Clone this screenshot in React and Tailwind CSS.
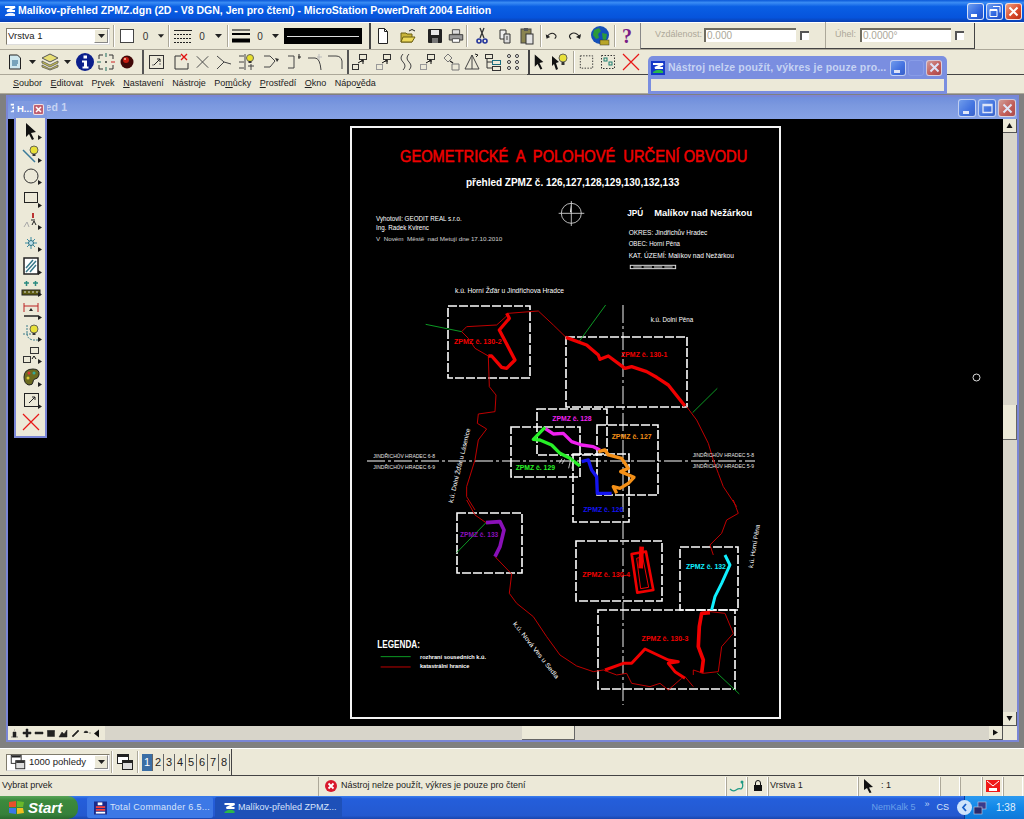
import React from "react";

const Ic = ({ w = 20, h = 20, children }) => (
  <svg width={w} height={h} viewBox={`0 0 ${w} ${h}`} className="block" fill="none">
    {children}
  </svg>
);

// --- toolbar icons ---
const Drop = () => (
  <svg width="9" height="5" viewBox="0 0 9 5" className="block"><path d="M1 0h7L4.500 4z" fill="#222" /></svg>
);
const NewDoc = () => <Ic><path d="M5.500 2.500h6l3 3v12h-9z" fill="#fff" stroke="#222" /><path d="M11.500 2.500v3h3" stroke="#222" /></Ic>;
const OpenDoc = () => <Ic><path d="M3 7h5l1 1h5v8H3z" fill="#c8b43a" stroke="#6b5f10" /><path d="M5 11h12l-3 5H3z" fill="#ecd85a" stroke="#6b5f10" /><path d="M11 5q3-3 6 0" stroke="#222" /></Ic>;
const Save = () => <Ic><rect x="3" y="3" width="14" height="14" rx="1" fill="#222" /><rect x="6" y="4" width="8" height="5" fill="#e8e8e8" /><rect x="7" y="12" width="6" height="5" fill="#777" /></Ic>;
const Print = () => <Ic><path d="M6 3h8v5H6z" fill="#ddd" stroke="#444" /><path d="M2.500 8.500h15v6h-15z" fill="#999" stroke="#333" /><path d="M6 13h8v4H6z" fill="#fff" stroke="#444" /></Ic>;
const Cut = () => <Ic><path d="M8 2l4 10M12 2L8 12" stroke="#333" strokeWidth="1.300" /><circle cx="7" cy="15" r="2" stroke="#23359c" strokeWidth="1.600" /><circle cx="13" cy="15" r="2" stroke="#23359c" strokeWidth="1.600" /></Ic>;
const Copy = () => <Ic><path d="M5 4h6v9H5z" fill="#eee" stroke="#333" /><path d="M9 8h6v9H9z" fill="#dcdcdc" stroke="#333" /><path d="M11 11h2M11 13h2" stroke="#444" /></Ic>;
const Paste = () => <Ic><rect x="4" y="3" width="10" height="14" fill="#8a8450" stroke="#444" /><rect x="7" y="2" width="4" height="3" fill="#555" /><rect x="9" y="8" width="7" height="10" fill="#e4e4e4" stroke="#333" /></Ic>;
const Undo = () => <Ic><path d="M4 11q5-6 9-3 3 2 0 5" stroke="#222" strokeWidth="1.200" /><path d="M3 8l1 5 4-2z" fill="#222" /></Ic>;
const Redo = () => <Ic><path d="M16 11q-5-6-9-3-3 2 0 5" stroke="#222" strokeWidth="1.200" /><path d="M17 8l-1 5-4-2z" fill="#222" /></Ic>;
const Globe = () => <svg width="20" height="22" viewBox="0 0 20 22" className="block"><circle cx="10" cy="10" r="9" fill="#1550b8" /><path d="M4 5l5-2 2 3-3 3 1 4-3 1-3-4zM12 8l5 1-1 6-3 1z" fill="#2d9a3a" /><rect x="10" y="15" width="9" height="5" fill="#b8a528" stroke="#333" strokeWidth=".5" /></svg>;
const Help = () => <div className="text-[20px] leading-none font-bold text-[#7a1d86] font-['Liberation_Serif',serif]">?</div>;

const Doc2 = () => <Ic><path d="M4.500 3h8l3 3v11h-11z" fill="#cfe8ee" stroke="#222" /><path d="M7 9h6M7 11h6M7 13h5" stroke="#1f5f88" /></Ic>;
const Layers = () => <Ic><path d="M2 6l8-4 8 4-8 4z" fill="#e8df74" stroke="#555" /><path d="M2 9l8 4 8-4v2l-8 4-8-4zM2 13l8 4 8-4v2l-8 3-8-3z" fill="#cfc64e" stroke="#555" strokeWidth=".8" /></Ic>;
const Info = () => <svg width="20" height="20" viewBox="0 0 20 20" className="block"><circle cx="10" cy="10" r="9" fill="#0b1f8c" /><rect x="8.500" y="3.500" width="3.500" height="3" fill="#fff" /><path d="M7 8.500h5v6h1.500v2h-6v-2H9v-4H7z" fill="#fff" /></svg>;
const Fence = () => <Ic><path d="M3 7V3h4M13 3h4v4M17 13v4h-4M7 17H3v-4" stroke="#333" /><path d="M10 1v4M10 15v4M1 10h4" stroke="#1c6d5e" /><path d="M15 10h4" stroke="#c22" /><circle cx="10" cy="10" r="1" fill="#333" /></Ic>;
const Ball = () => <svg width="16" height="16" viewBox="0 0 16 16" className="block"><circle cx="8" cy="8" r="6.500" fill="#400808" /><circle cx="7" cy="6" r="3" fill="#c41b10" /><circle cx="6" cy="5" r="1" fill="#f6c8a8" /></svg>;
const BoxArrow = () => <Ic><rect x="2.500" y="3.500" width="14" height="13" stroke="#333" /><path d="M7 13l6-6M10 7h3v3" stroke="#222" /><path d="M5 13h2M13 11v2" stroke="#777" /></Ic>;
const CornerX = () => <Ic><path d="M10 4H4v13h13v-6" stroke="#333" /><path d="M10 2l6 6M16 2l-6 6" stroke="#e01010" strokeWidth="1.400" /></Ic>;
const XThin = () => <Ic><path d="M4 4l12 12M16 4L4 16" stroke="#444" /></Ic>;
const Branch = () => <Ic><path d="M3 4l7 6 7 2M10 10l-7 7" stroke="#444" /></Ic>;
const BulbLine = () => <Ic><path d="M2 4h5M2 10h5M2 16h5M8 2v16M14 12v6M11 14h6" stroke="#444" /><circle cx="13" cy="6" r="3.500" fill="#e8df2c" stroke="#665" /><rect x="11.500" y="9" width="3" height="2" fill="#333" /></Ic>;
const Chev = () => <Ic><path d="M3 4h6l5 5-5 6H3" stroke="#444" /><path d="M14 6l4 1-2 3z" fill="#333" /></Ic>;
const BracketUp = () => <Ic><path d="M4 4h6v12H4" stroke="#444" /><path d="M14 5l3 0M15 2v5" stroke="#222" /></Ic>;
const CurveA = () => <Ic><path d="M3 6h7q5 0 6 12" stroke="#444" /><path d="M14 2v6M12 5h5" stroke="#bbb" /></Ic>;
const CurveB = () => <Ic><path d="M3 4h8q5 0 6 5v8" stroke="#444" /></Ic>;
const TwoBox = ({ light }) => <Ic><rect x="2.500" y="12.500" width="6" height="5" stroke={light ? "#999" : "#333"} /><rect x="9.500" y="2.500" width="7" height="5" stroke="#333" /><path d="M8 11l5-3v4M11 9h3" stroke="#111" /></Ic>;
const Wavy = () => <Ic><path d="M7 2q-4 4 0 8t0 8M13 2q-4 4 0 8t0 8" stroke="#444" /></Ic>;
const Diamond = () => <Ic><path d="M7 2l4 4-4 4-4-4zM11 12h7v6h-7z" stroke="#777" /><path d="M9 9l3 2" stroke="#222" strokeWidth="1.400" /></Ic>;
const Tri = () => <Ic><path d="M10 3L3 17h14z" stroke="#444" /><path d="M10 3v14" stroke="#444" /><path d="M13 2l3 1-2 2" stroke="#222" /></Ic>;
const Tree = () => <Ic><rect x="2.500" y="2.500" width="7" height="4" stroke="#333" /><rect x="9.500" y="8.500" width="8" height="4" stroke="#1c6d7e" /><rect x="9.500" y="14.500" width="8" height="4" stroke="#333" /><path d="M4 7v9h5M4 10h5" stroke="#333" /></Ic>;
const Dots = () => <Ic><g stroke="#333" fill="#fff">{[4, 10, 16].flatMap((y) => [5, 13].map((x) => <circle key={x + "-" + y} cx={x} cy={y} r="1.500" />))}</g></Ic>;
const Pointer = () => <Ic><path d="M5 2l9 8-4 1 3 6-2 1-3-6-3 3z" fill="#111" /></Ic>;
const PointBulb = () => <Ic><path d="M2 4l7 6-3 1 2 6-2 1-2-6-2 2z" fill="#111" /><circle cx="13" cy="6" r="4" fill="#e8e038" stroke="#665" /><rect x="11.500" y="10" width="3" height="3" fill="#333" /></Ic>;
const DotSel = () => <Ic><rect x="3.500" y="3.500" width="13" height="13" stroke="#333" strokeDasharray="1.500 1.500" /></Ic>;
const DotSel2 = () => <Ic><rect x="3.500" y="3.500" width="13" height="13" stroke="#333" strokeDasharray="1.500 1.500" /><rect x="6" y="6" width="3" height="3" stroke="#1c7d6e" /><rect x="11" y="10" width="3" height="3" stroke="#1c7d6e" /></Ic>;
const RedX = ({ s = 20 }) => <svg width={s} height={s} viewBox="0 0 20 20" className="block"><path d="M2 2l16 16M18 2L2 18" stroke="#e81818" strokeWidth="1.200" /></svg>;
const Views = () => <Ic><rect x="2.500" y="2.500" width="11" height="9" fill="#fff" stroke="#222" /><path d="M3 3h10v2H3z" fill="#222" /><rect x="7.500" y="8.500" width="10" height="9" fill="#ddd" stroke="#222" /><path d="M8 9h9v2H8z" fill="#222" /></Ic>;
const LineStyle = () => <svg width="18" height="15" viewBox="0 0 18 15" className="block"><path d="M0 1.500h18" stroke="#222" /><path d="M0 5.500h18M0 9.500h18M0 13.500h18" stroke="#222" strokeDasharray="2 1" /></svg>;
const Weight = () => <svg width="18" height="15" viewBox="0 0 18 15" className="block"><path d="M0 1h18" stroke="#000" /><path d="M0 5h18" stroke="#000" strokeWidth="2" /><path d="M0 11.500h18" stroke="#000" strokeWidth="4" /></svg>;

// --- toolbox icons ---
const BoxIcons = [
  <Ic key="a"><path d="M5 2l10 9-5 1 3 6-2 1-3-6-3 3z" fill="#111" /></Ic>,
  <Ic key="b"><path d="M2 6l12 12" stroke="#3a7a9a" strokeWidth="1.500" /><circle cx="13" cy="6" r="4" fill="#e8e038" stroke="#665" /><rect x="11.500" y="10" width="3" height="2" fill="#333" /></Ic>,
  <Ic key="c"><circle cx="10" cy="10" r="7" stroke="#333" /></Ic>,
  <Ic key="d"><rect x="3.500" y="4.500" width="13" height="10" stroke="#222" /></Ic>,
  <Ic key="e"><path d="M3 16l3-5 2 5" stroke="#aaa" /><path d="M10 9h4M11 14l2-4 2 4" stroke="#222" /><path d="M12 2v5" stroke="#b33" strokeWidth="2" /></Ic>,
  <Ic key="f"><path d="M10 4v12M4 10h12M6 6l8 8M14 6l-8 8" stroke="#3a8aa0" /><circle cx="10" cy="10" r="2.500" fill="#bfe0ea" stroke="#2c6f80" /></Ic>,
  <Ic key="g"><rect x="3" y="2" width="14" height="16" fill="#fff" stroke="#222" strokeWidth="1.500" /><path d="M5 12l7-8M5 16l10-11M9 16l6-7" stroke="#3a7a8a" strokeWidth="1.500" /></Ic>,
  <Ic key="h"><path d="M3 5h5M5.500 3v5M12 5h5M14.500 3v5" stroke="#2a8a80" strokeWidth="1.500" /><rect x="1" y="12" width="18" height="5" fill="#5d5a10" stroke="#222" /><path d="M4 13v2M8 13v2M12 13v2M16 13v2" stroke="#ddd" /></Ic>,
  <Ic key="i"><path d="M3 3v9M17 3v9M3 6h14" stroke="#b22" /><path d="M8 11l2-3 2 3z" fill="#222" /><path d="M3 16h14" stroke="#222" strokeWidth="1.500" /></Ic>,
  <Ic key="j"><path d="M6 2v8q0 6 6 7h6M2 11h8" stroke="#3a7a8a" strokeDasharray="2 1" /><circle cx="13" cy="6" r="4" fill="#e8e038" stroke="#665" /><rect x="11.500" y="10" width="3" height="2" fill="#333" /></Ic>,
  <Ic key="k"><rect x="2.500" y="11.500" width="7" height="6" stroke="#333" /><rect x="9.500" y="2.500" width="8" height="6" stroke="#333" /><path d="M11 14l2-3 2 3" stroke="#111" /></Ic>,
  <Ic key="l"><path d="M3 10q0-8 9-8 7 0 6 6-1 4-4 4-2 0-2 3t-4 3q-5-1-5-8z" fill="#6b6a20" stroke="#222" /><circle cx="8" cy="6" r="1.500" fill="#d33" /><circle cx="13" cy="6" r="1.500" fill="#3a9" /><circle cx="7" cy="11" r="1.500" fill="#dc3" /></Ic>,
  <Ic key="m"><rect x="3.500" y="3.500" width="14" height="13" stroke="#222" /><path d="M8 13l6-6M11 7h3v3" stroke="#222" /></Ic>,
  <RedX key="n" s={20} />,
];

const Sep = () => <div className="w-[2px] h-[22px] mx-[1px] border-l border-l-[#aca899] border-r border-r-white shrink-0" />;
const Cell = ({ w = 22, children }) => <div style={{ width: w }} className="flex items-center justify-center shrink-0">{children}</div>;

const Combo = ({ children, icon }) => (
  <div className="w-[104px] h-[17px] bg-white border border-[#7f7b6c] border-r-[#ddd] border-b-[#ddd] flex items-center shrink-0">
    {icon}
    <span className="flex-1 pl-[1px] text-[9.500px] leading-none text-[#222] truncate">{children}</span>
    <div className="w-[14px] h-[14px] bg-[#ece9d8] border border-[#888] border-t-white border-l-white flex items-center justify-center mr-[1px] shrink-0"><Drop /></div>
  </div>
);

const WinBtn = ({ kind, size = 17, dim }) => {
  const bg = kind === "x"
    ? "bg-[linear-gradient(135deg,#f0a080,#d8482a_60%,#b82f18)]"
    : "bg-[linear-gradient(135deg,#6fa0f0,#2f66e0_60%,#2450c0)]";
  return (
    <div style={{ width: size, height: size, opacity: dim ? 0.75 : 1 }} className={`${bg} rounded-[3px] border border-white/80 flex items-center justify-center shrink-0`}>
      <svg width="13" height="13" viewBox="0 0 13 13">
        {kind === "min" && <rect x="2" y="9" width="6" height="3" fill="#fff" />}
        {kind === "max" && <path d="M2 2.500h9v8H2zM2 3.500h9" stroke="#fff" strokeWidth="1.300" fill="none" />}
        {kind === "res" && <path d="M5 1.500h7v6M2 4.500h7v7H2zM2 5.500h7" stroke="#fff" fill="none" />}
        {kind === "x" && <path d="M2.500 2.500l8 8M10.500 2.500l-8 8" stroke="#fff" strokeWidth="2" />}
      </svg>
    </div>
  );
};

const Logo = ({ s = 14, plain }) => (
  <svg width={s} height={s} viewBox="0 0 14 14" className="block shrink-0">
    {!plain && <rect width="14" height="14" fill="#1538c8" />}
    <path d="M2 3h10L4 7h8" stroke="#fff" strokeWidth="2" fill="none" />
    <path d="M2 11q5-4 10-1v2H2z" fill={plain ? "#e8f0ff" : "#2ab84a"} />
  </svg>
);

const Title = () => (
  <div className="h-[22px] shrink-0 flex items-center pl-[3px] pr-[2px] bg-[linear-gradient(180deg,#0a58d8_0%,#3a8cf4_12%,#0a5fe4_30%,#0654dc_80%,#0a3fb0_100%)]">
    <Logo plain />
    <span className="ml-[1px] text-white font-bold text-[10.500px] whitespace-nowrap">Malíkov-přehled ZPMZ.dgn (2D - V8 DGN, Jen pro čtení) - MicroStation PowerDraft 2004 Edition</span>
    <div className="ml-auto flex gap-[2px]"><WinBtn kind="min" /><WinBtn kind="res" /><WinBtn kind="x" /></div>
  </div>
);

const Zero = ({ w }) => <Cell w={w}><span className="text-[10px] text-[#333]">0</span></Cell>;

const Row1 = () => (
  <div className="h-[27px] shrink-0 flex items-center pl-[6px] border-t border-t-[#fff]">
    <Combo>Vrstva 1</Combo>
    <div className="w-[2px] h-[22px] mx-[3px] border-l border-l-[#aca899] border-r border-r-white shrink-0" />
    <div className="w-[14px] h-[14px] bg-white border border-[#444] shrink-0 ml-[2px]" />
    <Zero w={23} />
    <Cell w={8}><Drop /></Cell>
    <div className="w-[2px] h-[22px] mx-[3px] border-l border-l-[#aca899] border-r border-r-white shrink-0" />
    <div className="ml-[1px]"><LineStyle /></div>
    <Zero w={20} />
    <Cell w={12}><Drop /></Cell>
    <div className="w-[2px] h-[22px] mx-[3px] border-l border-l-[#aca899] border-r border-r-white shrink-0" />
    <Weight />
    <Zero w={20} />
    <Cell w={10}><Drop /></Cell>
    <div className="w-[78px] h-[16px] ml-[4px] bg-black flex items-center justify-center shrink-0"><div className="w-[72px] h-[1px] bg-[#ddd]" /></div>
    <div className="w-[7px] shrink-0" />
    <div className="w-[2px] h-[27px] bg-[#444] shrink-0" />
    <div className="w-[2px] shrink-0" />
    <Cell w={20}><NewDoc /></Cell>
    <Cell w={30}><OpenDoc /></Cell>
    <Cell w={24}><Save /></Cell>
    <Cell w={18}><Print /></Cell>
    <Sep />
    <Cell w={26}><Cut /></Cell>
    <Cell w={20}><Copy /></Cell>
    <Cell w={24}><Paste /></Cell>
    <Sep />
    <Cell w={18}><Undo /></Cell>
    <Cell w={26}><Redo /></Cell>
    <Cell w={26}><Globe /></Cell>
    <Sep />
    <Cell w={20}><Help /></Cell>
    <div className="w-[3px] shrink-0" />
    <div className="h-[27px] w-[335px] shrink-0 flex items-center border-b-2 border-b-[#444] border-r border-r-[#444] border-l border-l-[#888] text-[9px] text-[#aca899]">
      <span className="ml-[14px] w-[49px]">Vzdálenost:</span>
      <div className="w-[92px] h-[14px] bg-white border-t-2 border-l-2 border-[#6f6c60] pl-[1px] text-[10px] leading-[12px]">0.000</div>
      <div className="w-[9px] h-[9px] ml-[4px] border-t-2 border-l-2 border-[#555] bg-white shrink-0" />
      <div className="w-[1px] h-[26px] bg-[#aca899] ml-[16px]" />
      <span className="ml-[9px] w-[25px]">Úhel:</span>
      <div className="w-[91px] h-[14px] bg-white border-t-2 border-l-2 border-[#6f6c60] pl-[1px] text-[10px] leading-[12px]">0.0000°</div>
      <div className="w-[9px] h-[9px] ml-[4px] border-t-2 border-l-2 border-[#555] bg-white shrink-0" />
    </div>
  </div>
);

const Row2 = () => (
  <div className="h-[25px] shrink-0 flex items-center pl-[5px] border-t border-t-[#aca899]">
    <Cell w={20}><Doc2 /></Cell>
    <Cell w={15}><Drop /></Cell>
    <Cell w={20}><Layers /></Cell>
    <Cell w={14}><Drop /></Cell>
    <Cell w={21}><Info /></Cell>
    <Cell w={22}><Fence /></Cell>
    <Cell w={20}><Ball /></Cell>
    <div className="w-[2px] h-[24px] bg-[#555] ml-[5px] shrink-0" />
    <Cell w={25}><BoxArrow /></Cell>
    <Cell w={24}><CornerX /></Cell>
    <Cell w={19}><XThin /></Cell>
    <Cell w={24}><Branch /></Cell>
    <Cell w={22}><BulbLine /></Cell>
    <Cell w={25}><Chev /></Cell>
    <Cell w={21}><BracketUp /></Cell>
    <Cell w={21}><CurveA /></Cell>
    <Cell w={20}><CurveB /></Cell>
    <div className="w-[2px] h-[24px] bg-[#555] ml-[2px] shrink-0" />
    <Cell w={22}><TwoBox /></Cell>
    <Cell w={25}><TwoBox light /></Cell>
    <Cell w={20}><Wavy /></Cell>
    <Cell w={24}><TwoBox light /></Cell>
    <Cell w={21}><Diamond /></Cell>
    <Cell w={21}><Tri /></Cell>
    <Cell w={21}><Tree /></Cell>
    <Cell w={22}><Dots /></Cell>
    <div className="w-[2px] h-[24px] bg-[#444] ml-[3px] shrink-0" />
    <Cell w={19}><Pointer /></Cell>
    <Cell w={22}><PointBulb /></Cell>
    <div className="w-[2px] h-[22px] mx-[2px] border-l border-l-[#aca899] border-r border-r-white shrink-0" />
    <Cell w={19}><DotSel /></Cell>
    <Cell w={24}><DotSel2 /></Cell>
    <Cell w={22}><RedX /></Cell>
  </div>
);

const menu = [
  ["", "S", "oubor"], ["", "E", "ditovat"], ["P", "r", "vek"], ["", "N", "astavení"],
  ["Nástro", "j", "e"], ["Po", "m", "ůcky"], ["", "P", "rostředí"], ["", "O", "kno"], ["Nápo", "v", "ěda"],
];
const Menu = () => (
  <div className="h-[20px] shrink-0 flex flex-col border-b border-b-[#aca899]">
    <div className="h-[1px] shrink-0 flex">
      <div className="w-[527px] bg-[#aca899]" />
      <div className="flex-1 bg-[#444]" />
    </div>
    <div className="flex-1 flex items-center pl-[13px] gap-[8.500px] text-[9px] text-[#222]">
      {menu.map((m, i) => (
        <span key={i} className="whitespace-nowrap">{m[0]}<u>{m[1]}</u>{m[2]}</span>
      ))}
    </div>
  </div>
);

const T = ({ x, x2, y, s, c = "#fff", b, o, sw, children }) => (
  <text x={x} y={y} textLength={x2 - x} lengthAdjust="spacingAndGlyphs" fontSize={s} fill={c} fontWeight={b ? 700 : 400} opacity={o} stroke={sw ? c : "none"} strokeWidth={sw} fontFamily="'Liberation Sans',sans-serif" style={{ whiteSpace: "pre" }}>{children}</text>
);
const Dash = ({ x, y, x2, y2 }) => <rect x={x} y={y} width={x2 - x} height={y2 - y} fill="none" stroke="#fff" strokeWidth="1.600" strokeDasharray="9 2" />;
const P = ({ d, c = "#c00000", w = 3, j = "round" }) => <path d={d} fill="none" stroke={c} strokeWidth={w} strokeLinejoin={j} />;

const Drawing = () => (
  <svg viewBox="8 119 995 607" width="995" height="607" className="block bg-black shrink-0">
    <rect x="351" y="127" width="429" height="591" fill="none" stroke="#f4f4f4" strokeWidth="2" />
    <path d="M623 305V705" stroke="#bbb" strokeWidth="1.300" strokeDasharray="18 3 3 3" />
    <path d="M367 461H755" stroke="#aaa" strokeWidth="1.300" strokeDasharray="18 3 3 3" />
    <Dash x={448} y={306} x2={530} y2={378} />
    <Dash x={566} y={337} x2={687} y2={407} />
    <Dash x={537} y={409} x2={607} y2={455} />
    <Dash x={511} y={427} x2={580} y2={477} />
    <Dash x={597} y={425} x2={658} y2={495} />
    <Dash x={573} y={454} x2={629} y2={522} />
    <Dash x={457} y={513} x2={522} y2={573} />
    <Dash x={576} y={541} x2={662} y2={601} />
    <Dash x={680} y={547} x2={738} y2={610} />
    <Dash x={598} y={610} x2={735} y2={689} />
    <circle cx="976.500" cy="377.500" r="3.500" fill="none" stroke="#ddd" />

    {/* header block */}
    <g transform="translate(350 125) scale(0.3333)">
      <T x={150} x2={1192} y={110} s={47} c="#f00000" sw={1.500}>GEOMETRICKÉ  A  POLOHOVÉ  URČENÍ OBVODU</T>
      <T x={348} x2={988} y={183} s={30} b>přehled ZPMZ č. 126,127,128,129,130,132,133</T>
      <T x={78} x2={335} y={287} s={20}>Vyhotovil: GEODIT REAL s.r.o.</T>
      <T x={78} x2={237} y={315} s={20}>Ing. Radek Kvirenc</T>
      <T x={78} x2={457} y={347} s={18} o={0.8}>V  Novém  Městě  nad Metují dne 17.10.2010</T>
      <T x={832} x2={880} y={273} s={25} b>JPÚ</T>
      <T x={913} x2={1207} y={273} s={25} b>Malíkov nad Nežárkou</T>
      <T x={836} x2={1072} y={330} s={21}>OKRES: Jindřichův Hradec</T>
      <T x={836} x2={990} y={364} s={21}>OBEC: Horní Pěna</T>
      <T x={836} x2={1152} y={398} s={21}>KAT. ÚZEMÍ: Malíkov nad Nežárkou</T>
      <rect x="841" y="421" width="136" height="10" fill="none" stroke="#ddd" strokeWidth="3" />
      <path d="M850 426H975" stroke="#ddd" strokeWidth="3" strokeDasharray="25 6" />
      <circle cx="664" cy="265" r="30" fill="none" stroke="#ddd" strokeWidth="2.500" />
      <path d="M664 228V303M626 265H703" stroke="#ddd" strokeWidth="2.500" />
      <path d="M660 262L664 232V262z" fill="#eee" />
      <T x={315} x2={642} y={503} s={20}>k.ú. Horní Žďár u Jindřichova Hradce</T>
    </g>

    {/* upper half of the map, zoom coordinates */}
    <g transform="translate(360 280) scale(0.3333)">
      <P d="M445 100L535 93L580 135L618 172" />
      <P d="M440 108L410 135L320 140L305 155L325 175L345 205L385 228L388 320L408 345L405 395L355 402L352 430L380 447L355 480L345 540L320 620L320 650L345 690" />
      <P d="M980 380L1010 420L1045 490L1060 540L1075 580L1090 620L1130 680" />
      <P d="M197 133L305 155M655 188L737 75M998 398L1072 325" c="#0c9a24" />
      <P d="M440 100L448 115L418 150L465 240L440 265L425 262L395 228L385 228" c="#f00000" w={10} />
      <P d="M618 172L680 195L715 225L720 238L745 228L795 265L815 260L860 275L890 292L925 315L975 378" c="#f00000" w={10} />
      <P d="M555 445L580 462L610 460L635 485L665 495L700 500L720 510" c="#f020f0" w={10} />
      <P d="M555 442L520 478L540 480L575 495L600 520L630 535L660 558" c="#28f028" w={10} />
      <P d="M665 545L685 540L695 570L710 590L712 640L755 640" c="#1414f0" w={10} />
      <P d="M715 515L735 510L745 525L785 535L805 565L782 575L822 592L805 610L780 625L760 620L770 640" c="#f49018" w={10} />
      <T x={282} x2={425} y={193} s={20} c="#f00000" b>ZPMZ č. 130-2</T>
      <T x={783} x2={922} y={232} s={20} c="#f00000" b>ZPMZ č. 130-1</T>
      <T x={577} x2={695} y={423} s={20} c="#f020f0" b>ZPMZ č. 128</T>
      <T x={755} x2={875} y={478} s={20} c="#f49018" b>ZPMZ č. 127</T>
      <T x={467} x2={585} y={570} s={20} c="#28f028" b>ZPMZ č. 129</T>
      <T x={872} x2={1000} y={125} s={19}>k.ú. Dolní Pěna</T>
      <T x={40} x2={225} y={533} s={15} o={0.9}>JINDŘICHŮV HRADEC 6-8</T>
      <T x={40} x2={225} y={568} s={15} o={0.9}>JINDŘICHŮV HRADEC 6-9</T>
      <T x={998} x2={1182} y={532} s={15} o={0.9}>JINDŘICHŮV HRADEC 5-8</T>
      <T x={998} x2={1182} y={565} s={15} o={0.9}>JINDŘICHŮV HRADEC 5-9</T>
      <g transform="translate(278 670) rotate(-76.600)"><T x={0} x2={229} y={0} s={19}>k.ú. Dolní Žďár u Lásenice</T></g>
      <path d="M598 550l8-14M606 552l8-14M626 565l6-26M636 566l4-24" stroke="#ddd" strokeWidth="2.500" />
    </g>

    {/* lower half of the map */}
    <g transform="translate(360 500) scale(0.3333)">
      <P d="M320 0L345 45L378 68" />
      <P d="M405 170L455 222L448 280L470 310L520 350L560 410L600 465L650 498L700 515L730 510" />
      <P d="M1120 0L1135 40L1100 60L1085 100L1050 135L1060 165" />
      <P d="M378 68L290 158M1072 520L1138 582" c="#0c9a24" />
      <P d="M378 68L420 65L432 90L420 140L405 170" c="#8a10b8" w={11} />
      <P d="M1095 165L1110 195L1085 250L1065 290L1055 330" c="#10f0ff" w={9} />
      <P d="M815 162L858 155L880 270L832 278Z" c="#f00000" w={8} />
      <P d="M830 175L848 170L866 262L842 266Z" c="#f00000" w={3} />
      <P d="M845 140L842 205" c="#f00000" w={14} />
      <P d="M1050 338L1025 340L1018 380L1015 440L1030 480L1025 520" c="#f00000" w={11} />
      <P d="M735 510L790 490L815 490L855 447L925 480L955 485L925 490L945 515L975 535" c="#f00000" w={9} />
      <P d="M975 530L1000 560M1050 335L1095 340L1120 400L1085 440L1075 515L1030 520L1000 510L1000 525M730 510L770 525L800 520L815 550L870 560L900 550L925 570L965 535" />
      <T x={300} x2={415} y={112} s={20} c="#8a10b8" b>ZPMZ č. 133</T>
      <T x={670} x2={790} y={35} s={20} c="#1414f0" b>ZPMZ č. 126</T>
      <T x={667} x2={810} y={232} s={20} c="#f00000" b>ZPMZ č. 130-4</T>
      <T x={978} x2={1098} y={207} s={20} c="#10f0ff" b>ZPMZ č. 132</T>
      <T x={845} x2={985} y={422} s={20} c="#f00000" b>ZPMZ č. 130-3</T>
      <T x={52} x2={180} y={443} s={32} b>LEGENDA:</T>
      <path d="M62 470H152" stroke="#0c9a24" strokeWidth="3" />
      <path d="M62 501H152" stroke="#c00000" strokeWidth="3" />
      <T x={180} x2={378} y={476} s={17} b>rozhraní sousedních k.ú.</T>
      <T x={180} x2={328} y={504} s={17} b>katastrální hranice</T>
      <g transform="translate(458 372) rotate(51.800)"><T x={0} x2={210} y={0} s={19}>k.ú. Nová Ves u Sedla</T></g>
      <g transform="translate(1178 205) rotate(-80.400)"><T x={0} x2={132} y={0} s={19}>k.ú. Horní Pěna</T></g>
    </g>
  </svg>
);

const ScrollBtn = ({ d }) => (
  <div className="w-[14px] h-[14px] bg-[#ece9d8] border-b border-r border-[#555] flex items-center justify-center shrink-0">
    <svg width="7" height="7" viewBox="0 0 7 7"><path d={d} fill="#111" /></svg>
  </div>
);

const viewIcons = ["M3 9V4h3v5zM1 9h7M4 2h1", "M4 1h2v3h3v2H6v3H4V6H1V4h3z", "M1 4h8v2H1z", "M1.500 2.500h7v6h-7zM1 3h8", "M1 9l3-5 2 2 3-4v7z", "M2 8l6-6 1 1-6 6z", "M2 5a2 2 0 0 1 4 0M7 5h2"];

const ChildWindow = () => (
  <div className="flex-1 flex flex-col border-2 border-[#7a86d6]">
    <div className="h-[22px] shrink-0 flex items-center pl-[1px] pr-[1px] bg-[linear-gradient(180deg,#6f8edc_0%,#7c99df_40%,#86a2e6_100%)]">
      <Logo s={12} plain />
      <span className="ml-[1px] text-[10.500px] font-bold text-[#c6d3f3] tracking-[0.2px]">Pohled 1</span>
      <div className="ml-auto flex gap-[2px]"><WinBtn kind="min" size={18} dim /><WinBtn kind="max" size={18} dim /><WinBtn kind="x" size={18} dim /></div>
    </div>
    <div className="flex h-[607px] shrink-0">
      <Drawing />
      <div className="w-[14px] flex flex-col bg-[#d8d5ca]">
        <ScrollBtn d="M3.500 1l3 5h-6z" />
        <div className="w-[14px] h-[35px] mt-[272px] bg-[#ece9d8] border-r border-b border-[#666] shrink-0" />
        <div className="flex-1" />
        <ScrollBtn d="M3.500 6l3-5h-6z" />
      </div>
    </div>
    <div className="h-[14px] shrink-0 flex bg-[#d8d5ca]">
      <div className="w-[97px] flex items-center bg-[#ece9d8] pl-[1px] shrink-0">
        {viewIcons.map((d, i) => (
          <svg key={i} width="12" height="10" viewBox="0 0 10 10" className="shrink-0"><path d={d} fill="#222" stroke="#222" strokeWidth=".5" /></svg>
        ))}
        <svg width="7" height="9" viewBox="0 0 7 9" className="shrink-0"><path d="M6 .5v8L1 4.500z" fill="#111" /></svg>
      </div>
      <div className="w-[417px] shrink-0" />
      <div className="w-[53px] bg-[#ece9d8] border-r border-b border-[#666] shrink-0" />
      <div className="flex-1" />
      <ScrollBtn d="M1 .5v6l5-3z" />
      <div className="w-[14px] bg-[#ece9d8] shrink-0" />
    </div>
  </div>
);

const ViewBar = () => (
  <div className="h-[28px] shrink-0 flex items-center pl-[6px] border-t border-t-white border-b border-b-[#444]">
    <Combo icon={<div className="ml-[1px] scale-90 shrink-0"><Views /></div>}>1000 pohledy</Combo>
    <Sep />
    <Cell w={22}><Views /></Cell>
    <Sep />
    <div className="flex ml-[2px]">
      {[1, 2, 3, 4, 5, 6, 7, 8].map((n) => (
        <div key={n} className={`w-[11px] h-[17px] flex items-center justify-center text-[11px] leading-none border-r border-[#666] ${n === 1 ? "bg-[#3a6ea5] text-white" : "bg-[#ece9d8] text-[#222]"}`}>{n}</div>
      ))}
    </div>
    <div className="w-[1px] h-[27px] bg-[#444] ml-[1px]" />
  </div>
);

const Stat = ({ w, className = "", children }) => (
  <div style={{ width: w }} className={`h-[19px] shrink-0 flex items-center border-l border-l-[#aca899] border-r border-r-white ${className}`}>{children}</div>
);

const StatusBar = () => (
  <div className="h-[20px] shrink-0 flex items-center text-[9px] text-[#222]">
    <span className="w-[318px] pl-[2px] shrink-0">Vybrat prvek</span>
    <Stat w={408}>
      <svg width="14" height="14" viewBox="0 0 14 14" className="ml-[5px] shrink-0"><circle cx="7" cy="7" r="6" fill="#d8182c" /><path d="M4.500 4.500l5 5M9.500 4.500l-5 5" stroke="#fff" strokeWidth="1.800" /></svg>
      <span className="ml-[3px] whitespace-nowrap">Nástroj nelze použít, výkres je pouze pro čtení</span>
    </Stat>
    <Stat w={21} className="justify-center">
      <svg width="16" height="14" viewBox="0 0 16 14"><path d="M1 10q3 3 6 1t5-1q3-2 1-7" fill="none" stroke="#1f9a86" strokeWidth="1.300" /><circle cx="13" cy="3" r="1.500" fill="#1f9a86" /></svg>
    </Stat>
    <Stat w={21} className="justify-center">
      <svg width="10" height="12" viewBox="0 0 10 12"><rect x="1" y="5" width="8" height="6" fill="#111" /><path d="M2.500 5V3a2.500 2.500 0 0 1 5 0v2" fill="none" stroke="#111" /></svg>
    </Stat>
    <Stat w={90} className="pl-[1px]">Vrstva 1</Stat>
    <Stat w={82}>
      <svg width="12" height="14" viewBox="0 0 12 14" className="ml-[4px]"><path d="M1 0l9 8-4 .5 2.500 5-2 .5-2.500-5L1 11z" fill="#111" /></svg>
      <span className="ml-[6px]">: 1</span>
    </Stat>
    <Stat w={20} />
    <Stat w={22} />
    <Stat w={21} className="justify-center">
      <svg width="14" height="14" viewBox="0 0 14 14"><rect x="0" y="1" width="14" height="12" fill="#f01818" /><path d="M1 2l6 5 6-5" stroke="#fff" fill="none" /><rect x="3" y="9" width="8" height="3" fill="#fff" /></svg>
    </Stat>
    <Stat w={20} />
  </div>
);

const Taskbar = () => (
  <div className="h-[23px] shrink-0 flex items-center bg-[linear-gradient(180deg,#3c80ee_0%,#245edb_12%,#2459d0_85%,#1a46ad_100%)] text-white text-[9px]">
    <div className="w-[78px] h-[23px] shrink-0 flex items-center rounded-r-[10px] bg-[linear-gradient(180deg,#5aa55a_0%,#3c8a3c_20%,#36803a_80%,#2a6a2e_100%)]">
      <svg width="18" height="16" viewBox="0 0 18 16" className="ml-[8px] shrink-0"><path d="M1 2l7-1v6H1z" fill="#e8502a" /><path d="M9 1l7 1-1 5H9z" fill="#6ab82a" /><path d="M1 8h7v6l-7-1z" fill="#3a78e8" /><path d="M9 8h6l1 5-7 1z" fill="#f0c020" /></svg>
      <span className="ml-[2px] text-[15px] leading-none font-bold italic">Start</span>
    </div>
    <div className="w-[126px] h-[21px] ml-[9px] flex items-center rounded-[2px] bg-[#3c78e6] shrink-0">
      <svg width="13" height="14" viewBox="0 0 14 14" className="ml-[7px] shrink-0"><rect width="14" height="14" fill="#1a2a8a" /><rect x="2" y="5" width="10" height="2" fill="#f04040" /><rect x="2" y="8" width="10" height="2" fill="#f04040" /><rect x="2" y="11" width="10" height="2" fill="#fff" /><rect x="4" y="1" width="5" height="3" fill="#fff" /></svg>
      <span className="ml-[3px] whitespace-nowrap text-[#d8e4fa] tracking-[0.3px]">Total Commander 6.5...</span>
    </div>
    <div className="w-[127px] h-[21px] ml-[2px] flex items-center rounded-[2px] bg-[#1e50b8] shrink-0">
      <svg width="15" height="14" viewBox="0 0 14 14" className="ml-[7px] shrink-0"><path d="M2 3h10L4 7h8" stroke="#fff" strokeWidth="2" fill="none" /><path d="M2 11q5-4 10-1v2H2z" fill="#2ab84a" /></svg>
      <span className="ml-[1px] whitespace-nowrap text-[#d8e4fa]">Malíkov-přehled ZPMZ...</span>
    </div>
    <span className="ml-auto text-[#6aa0ea] whitespace-nowrap">NemKalk 5</span>
    <span className="ml-[9px] text-[#bcd4f6] -mt-[5px]">»</span>
    <span className="ml-[7px] mr-[15px] text-[#d8e4fa]">CS</span>
    <div className="w-[60px] h-[23px] flex items-center bg-[linear-gradient(180deg,#2c9af0_0%,#1288e8_50%,#0f78d8_100%)] border-l border-l-[#0b3b9a] shrink-0 relative">
      <div className="w-[15px] h-[15px] rounded-full bg-[#cfe4fb] flex items-center justify-center -ml-[8px] shrink-0">
        <svg width="9" height="9" viewBox="0 0 9 9"><path d="M6 1L3 4.500 6 8" fill="none" stroke="#1a5fc8" strokeWidth="1.800" /></svg>
      </div>
      <svg width="14" height="14" viewBox="0 0 14 14" className="ml-[1px] shrink-0"><rect x="5" y="1" width="8" height="7" fill="#3a3a8a" stroke="#ccd" strokeWidth=".6" /><rect x="1" y="6" width="8" height="7" fill="#2a2a6a" stroke="#ccd" strokeWidth=".6" /></svg>
      <span className="ml-[9px] text-[#e4f0fc] text-[10px]">1:38</span>
    </div>
  </div>
);

const Toolbox = () => (
  <div className="absolute left-[14px] top-[101px] w-[33px] h-[337px] flex flex-col border-2 border-t-0 border-[#7a86d6] bg-[#ece9d8]">
    <div className="h-[17px] shrink-0 -mx-[2px] flex items-center bg-[#7f9ae0] text-white text-[9.500px] font-bold pl-[3px]">
      <span>H...</span>
      <div className="ml-auto mr-[3px] w-[11px] h-[11px] rounded-[2px] bg-[#c06070] border border-white/80 flex items-center justify-center shrink-0">
        <svg width="7" height="7" viewBox="0 0 7 7"><path d="M1 1l5 5M6 1L1 6" stroke="#fff" strokeWidth="1.500" /></svg>
      </div>
    </div>
    <div className="flex flex-col items-center pt-[2px]">
      {BoxIcons.map((ic, i) => (
        <div key={i} className="h-[22.400px] w-full flex items-center justify-center relative">
          {ic}
          {i < 13 && <svg width="4" height="5" viewBox="0 0 4 5" className="absolute right-[3px] bottom-[2px]"><path d="M0 0l4 2.500L0 5z" fill="#222" /></svg>}
        </div>
      ))}
    </div>
  </div>
);

const MsgWindow = () => (
  <div className="absolute left-[648px] top-[56px] w-[299px] h-[38px] flex flex-col rounded-t-[5px] bg-[#7a8ee0] px-[3px] pb-[3px]">
    <div className="h-[23px] shrink-0 flex items-center">
      <Logo />
      <span className="ml-[3px] text-[10.500px] font-bold text-[#c6d3f3] tracking-[0.15px] whitespace-nowrap">Nástroj nelze použít, výkres je pouze pro...</span>
      <div className="ml-auto flex gap-[2px] mr-[2px]">
        <WinBtn kind="min" size={16} dim />
        <div className="w-[16px] h-[16px] rounded-[3px] border border-[#8ea2ea] shrink-0 opacity-70" />
        <WinBtn kind="x" size={16} dim />
      </div>
    </div>
    <div className="flex-1 bg-[#ece9d8]" />
  </div>
);

export default function App() {
  return (
    <div className="relative w-[1024px] h-[819px] overflow-hidden flex flex-col bg-[#ece9d8] font-['Liberation_Sans',sans-serif]">
      <Title />
      <Row1 />
      <Row2 />
      <Menu />
      <div className="h-[654px] shrink-0 flex flex-col bg-[#808080] pt-[1px] pb-[6px] pl-[6px] pr-[5px]">
        <ChildWindow />
      </div>
      <ViewBar />
      <StatusBar />
      <Taskbar />
      <Toolbox />
      <MsgWindow />
    </div>
  );
}
